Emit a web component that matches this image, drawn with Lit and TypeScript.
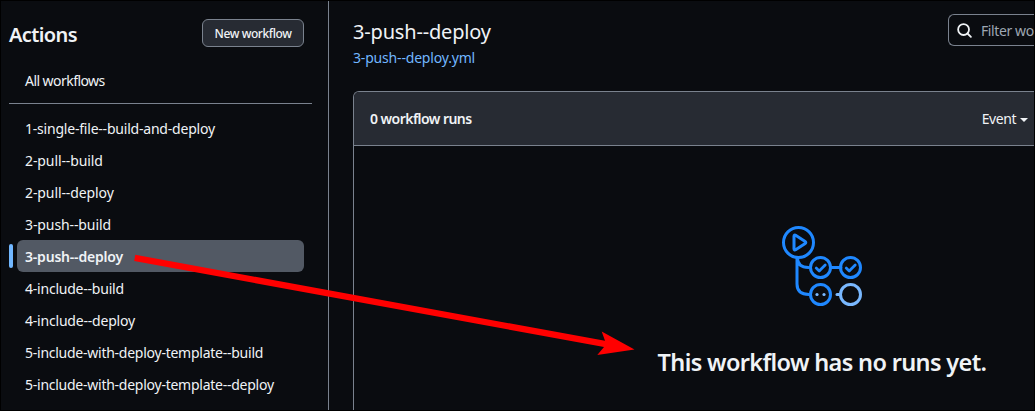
import { LitElement, html, css, svg } from "lit";
import { customElement, property } from "lit/decorators.js";
import { classMap } from "lit/directives/class-map.js";
import { styleMap } from "lit/directives/style-map.js";

// Each workflow with its letter tracking in px.
const WORKFLOWS: [string, number][] = [
  ["1-single-file--build-and-deploy", -0.21],
  ["2-pull--build", -0.1],
  ["2-pull--deploy", -0.1],
  ["3-push--build", -0.1],
  ["3-push--deploy", -0.2],
  ["4-include--build", -0.22],
  ["4-include--deploy", -0.2],
  ["5-include-with-deploy-template--build", -0.25],
  ["5-include-with-deploy-template--deploy", -0.25],
];

@customElement("workflow-nav")
export class WorkflowNav extends LitElement {
  @property() selected = "";

  static styles = css`
    :host {
      box-sizing: border-box;
      display: block;
      width: 328px;
      flex: none;
      padding: 18px 16px 0 8px;
      border-right: 1px solid #7a828e;
    }
    .head {
      display: flex;
      justify-content: space-between;
      align-items: center;
      height: 28px;
      padding-right: 8px;
    }
    .heading {
      margin: 0;
      font-size: 20px;
      line-height: 30px;
      font-weight: 600;
      letter-spacing: -0.6px;
      padding-top: 4px;
    }
    .new {
      box-sizing: border-box;
      width: 102px;
      height: 28px;
      padding: 2px 0 0;
      border: 1px solid #7a828e;
      border-radius: 6px;
      background: #272b33;
      color: inherit;
      font: 500 12px/24px "Noto Sans", sans-serif;
      letter-spacing: -0.42px;
      white-space: nowrap;
    }
    .list {
      list-style: none;
      margin: 0;
      padding: 0 8px;
    }
    .all {
      margin-top: 17px;
      margin-bottom: 7px;
      letter-spacing: -0.55px;
    }
    .rule {
      height: 1px;
      background: #7a828e;
      margin-bottom: 8px;
    }
    .item {
      position: relative;
      height: 32px;
      padding-left: 8px;
      line-height: 33px;
      border-radius: 6px;
      white-space: nowrap;
    }
    .current {
      background: #525964;
      font-weight: 600;
    }
    .current::before {
      content: "";
      position: absolute;
      left: -8px;
      top: 4px;
      width: 4px;
      height: 24px;
      border-radius: 2px;
      background: #71b7ff;
    }
  `;

  render() {
    return html`
      <div class="head">
        <h2 class="heading">Actions</h2>
        <button class="new">New workflow</button>
      </div>
      <ul class="list all"><li class="item">All workflows</li></ul>
      <div class="rule"></div>
      <ul class="list">
        ${WORKFLOWS.map(
          ([name, tracking]) => html`<li
            class=${classMap({ item: true, current: name === this.selected })}
            style=${styleMap({ letterSpacing: `${tracking}px` })}
          >${name}</li>`
        )}
      </ul>
    `;
  }
}

const check = (x: number, y: number) => svg`<path d="M${x - 4.3} ${y + 0.6}l3 2.900 6-6" stroke-width="2.8"/>`;

@customElement("workflow-runs")
export class WorkflowRuns extends LitElement {
  @property() name = "";

  static styles = css`
    :host {
      display: flex;
      flex-direction: column;
      flex: 1;
      min-width: 0;
      padding: 13px 0 0 24px;
      overflow: hidden;
    }
    .top {
      display: flex;
      justify-content: space-between;
      height: 77px;
    }
    .title {
      margin: 0;
      padding-top: 3px;
      font-size: 20px;
      line-height: 30px;
      font-weight: 400;
      letter-spacing: -0.18px;
    }
    .file {
      display: block;
      color: #71b7ff;
      line-height: 21px;
      letter-spacing: -0.18px;
    }
    .search {
      box-sizing: border-box;
      display: flex;
      flex: none;
      align-items: center;
      gap: 9px;
      width: 86px;
      height: 32px;
      padding-left: 8px;
      border: 1px solid #7a828e;
      border-right: 0;
      border-radius: 6px 0 0 6px;
      white-space: nowrap;
    }
    .search svg {
      flex: none;
    }
    .hint {
      color: #9ea7b3;
      letter-spacing: -0.4px;
    }
    .box {
      flex: 1;
      border: 1px solid #7a828e;
      border-width: 1px 0 0 1px;
      border-radius: 6px 0 0 0;
      overflow: hidden;
    }
    .bar {
      display: flex;
      justify-content: space-between;
      align-items: center;
      height: 53px;
      padding: 0 6px 0 16px;
      background: #272b33;
      border-bottom: 1px solid #7a828e;
    }
    .count {
      font-weight: 600;
      letter-spacing: -0.55px;
    }
    .event {
      display: flex;
      align-items: center;
      gap: 4px;
      letter-spacing: -0.45px;
    }
    .caret {
      border: 4px solid transparent;
      border-top-color: currentColor;
      border-bottom: 0;
      margin-top: 3px;
    }
    .blank {
      display: flex;
      flex-direction: column;
      align-items: center;
      padding: 80px 0 0 256px;
      width: 424px;
    }
    .message {
      margin: 38px 0 0;
      font-size: 23.5px;
      line-height: 36px;
      font-weight: 600;
      letter-spacing: -0.65px;
      white-space: nowrap;
    }
  `;

  render() {
    return html`
      <div class="top">
        <div>
          <h1 class="title">${this.name}</h1>
          <a class="file">${this.name}.yml</a>
        </div>
        <div class="search">
          <svg width="15" height="15" viewBox="0 0 16 16" fill="none" stroke="#f0f3f6" stroke-width="1.9" stroke-linecap="round">
            <circle cx="7" cy="7" r="5.8" />
            <path d="M11.2 11.2 14.8 14.8" />
          </svg>
          <span class="hint">Filter wo</span>
        </div>
      </div>
      <div class="box">
        <div class="bar">
          <span class="count">0 workflow runs</span>
          <span class="event">Event<span class="caret"></span></span>
        </div>
        <div class="blank">
          <svg width="82" height="80" viewBox="0 0 82 80" fill="none" stroke="#1f88ff" stroke-width="3" stroke-linecap="round" stroke-linejoin="round">
            <circle cx="17.5" cy="16.5" r="15" />
            <path d="M13 10.2v12.6c0 1 .8 1.4 1.6.9l9.6-6.2c.8-.5.8-1.5 0-2l-9.6-6.2c-.8-.5-1.6-.1-1.6.9z" />
            <path d="M16 32v26c0 6.500 4 10.400 12 10.400M16.500 32c0 6 3 9.400 11 9.400M50 41.500h10" />
            <circle cx="39.500" cy="41.500" r="10" />
            <circle cx="69.500" cy="41.500" r="10" />
            <circle cx="39.500" cy="68.500" r="10" />
            ${check(39.5, 41.5)} ${check(69.5, 41.5)}
            <g fill="#79b8ff" stroke="none"><circle cx="36" cy="68.500" r="1.600" /><circle cx="43" cy="68.500" r="1.600" /></g>
            <g stroke="#79b8ff"><circle cx="69.500" cy="68.500" r="10" /><path d="M56 68.500h3" /></g>
          </svg>
          <h3 class="message">This workflow has no runs yet.</h3>
        </div>
      </div>
    `;
  }
}

@customElement("app-root")
export class AppRoot extends LitElement {
  static styles = css`
    :host {
      box-sizing: border-box;
      position: relative;
      display: flex;
      width: 1035px;
      height: 411px;
      border: 1px solid #000;
      overflow: hidden;
      background: #0a0c10;
      color: #f0f3f6;
      font: 14px/21px "Noto Sans", sans-serif;
    }
    .arrow {
      position: absolute;
      left: -1px;
      top: -1px;
      pointer-events: none;
    }
  `;

  render() {
    return html`
      <workflow-nav selected="3-push--deploy"></workflow-nav>
      <workflow-runs name="3-push--deploy"></workflow-runs>
      <svg class="arrow" width="1035" height="411" viewBox="0 0 1035 411" fill="#f00">
        <path d="M135.300 254.800 605 340.800 601.700 331.500 634.500 349.500 597.300 355 604 347 134.200 261z" />
      </svg>
    `;
  }
}
